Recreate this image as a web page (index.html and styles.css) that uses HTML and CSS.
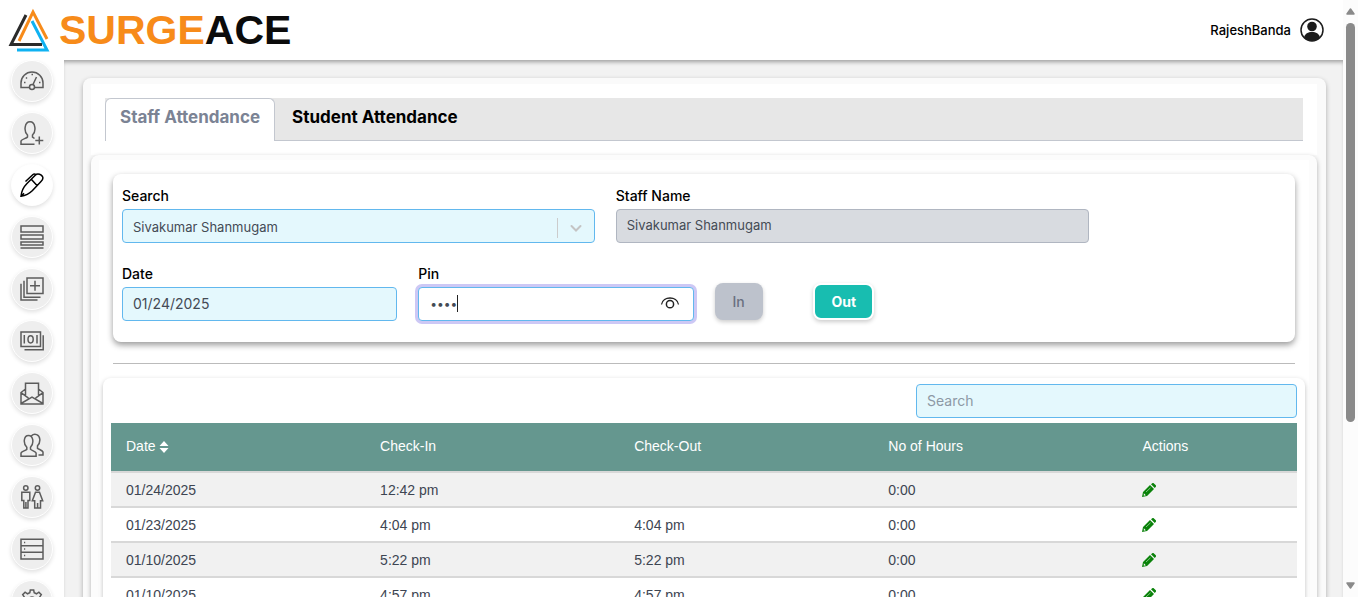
FILE: index.html
```html
<!DOCTYPE html>
<html lang="en">
<head>
<meta charset="utf-8">
<title>SurgeAce - Attendance</title>
<link rel="stylesheet" href="styles.css">
</head>
<body>
<div class="window">
  <div class="app">
    <header class="header">
      <a class="brand" href="#">
        <svg class="brand-mark" viewBox="0 0 42 44" aria-hidden="true">
          <path d="M18 7L3 36.500H34" fill="none" stroke="#2b2b2b" stroke-width="3"/>
          <path d="M11 33L25 4L39 31" fill="none" stroke="#f78b1a" stroke-width="3"/>
          <path d="M24 13L39 42H9" fill="none" stroke="#0fb2f2" stroke-width="3"/>
        </svg>
        <span class="brand-name"><span class="brand-first">SURGE</span>ACE</span>
      </a>
      <button class="account" type="button">
        <span>RajeshBanda</span>
        <svg class="account-icon" viewBox="0 0 24 24" aria-hidden="true">
          <circle cx="12" cy="12" r="11" fill="#fff" stroke="#1c1c1c" stroke-width="1.500"/>
          <circle cx="12" cy="8.500" r="4.800" fill="#1c1c1c"/>
          <path d="M4 19.500C5 15.500 8 14 12 14s7 1.500 8 5.500A11 11 0 0 1 4 19.500z" fill="#1c1c1c"/>
        </svg>
      </button>
    </header>
    <div class="body">
      <nav class="sidebar" aria-label="Main">
        <a class="nav-item" href="#" aria-label="Dashboard"><svg class="icon" viewBox="0 0 24 24"><path d="M9.500 18.500H1V14a11 11 0 0 1 22 0v4.500h-8.500M13 15.500L16.500 8"/><circle cx="12" cy="18" r="2.500"/><path d="M4 13.500h1.500M19 13.500h1.500M6 8.500l1 1M11.500 5.500h1.500"/></svg></a>
        <a class="nav-item" href="#" aria-label="Add user"><svg class="icon" viewBox="0 0 24 24"><path d="M14.500 23.300H1V20c.5-2 5.500-2.500 6.500-4v-2C3.500 10.500 4.500.8 10 .8s6.500 9.700 2.500 13.200v2l2 1.500M19.300 15.500v8M15.300 19.500h8"/></svg></a>
        <a class="nav-item active" href="#" aria-label="Attendance"><svg class="icon" viewBox="0 0 24 24"><path d="M1 23.200C1.500 18 3.500 14 7 10.500L15.500 2c2.500-2.500 6 0 7 1.500 1 1.800 0 3.500-1.500 5l-8.500 9C9.500 20.500 6 22.500 1 23.200zM1 23.200l3-3M11.500 6.500l5.500 6M5.500 8.500L13 1.500c1-.8 2-.5 3 .2"/></svg></a>
        <a class="nav-item" href="#" aria-label="Lists"><svg class="icon" viewBox="0 0 24 24"><path d="M1 1h22v6H1zM1 10h22v4H1zM1 17h22v3H1zM.500 23h23"/></svg></a>
        <a class="nav-item" href="#" aria-label="Add record"><svg class="icon" viewBox="0 0 24 24"><path d="M7 1h16v15.500H7zM15 3.800v10M10 8.800h10M4 3.700v16.600h16.500M1 6.700V23h16.500"/></svg></a>
        <a class="nav-item" href="#" aria-label="Payments"><svg class="icon" viewBox="0 0 24 24"><path d="M1 3h19.500v14.500H1zM23.200 6.300v14.400H4.500M4.300 6v8.500M17 6v8.500"/><ellipse cx="10.600" cy="10.300" rx="2.600" ry="3.600"/></svg></a>
        <a class="nav-item" href="#" aria-label="Messages"><svg class="icon" viewBox="0 0 24 24"><path d="M5.500 8L1 11.500V23h22V11.500L18.500 8M1 11.700l7.500 5.500M23 11.700l-7.500 5.500M5.500 15V2.300h13V15M1 22.500l11-6.300 11 6.300"/></svg></a>
        <a class="nav-item" href="#" aria-label="Staff"><svg class="icon" viewBox="0 0 24 24"><path d="M1 23.300V20c.5-1.500 4-2.200 5.800-3.700v-2C3 10.500 3.500 2.500 8.500 2.500s5.700 8 2 11.800v2c1.700 1.500 5 2.200 5.600 3.700v3.300zM11.500 2.800c3-3 8-1.300 8.300 3.500.2 2.700-.7 5-2.300 6.500v2.500c1.500 1.200 5 2 5.500 3.700v3h-4.500"/></svg></a>
        <a class="nav-item" href="#" aria-label="Students"><svg class="icon" viewBox="0 0 24 24"><circle cx="5.800" cy="3" r="2.200"/><circle cx="17.500" cy="3" r="2.200"/><path d="M1.800 7.300h8v8.200H8V23H3.800v-7.500h-2zM5.900 17v6M15.500 7.300h4l3.200 8.500h-2.200V23h-5.800v-7.200h-2.400zM17.600 18v5"/></svg></a>
        <a class="nav-item" href="#" aria-label="Records"><svg class="icon" viewBox="0 0 24 24"><path d="M1 2.300h22V22H1zM1 8.800h22M1 15.300h22M4 5.600h1.200M4 12h1.200M4 18.500h1.200"/></svg></a>
        <a class="nav-item" href="#" aria-label="Settings"><svg class="icon" viewBox="0 0 24 24"><path d="M9.800 3.800L10.300 1h3.400l.5 2.800 2.300 1 2.400-1.600 2.400 2.400-1.600 2.400 1 2.300 2.800.5v2.400l-2.800.5-1 2.300 1.600 2.400-2.400 2.400-2.400-1.600-2.300 1-.5 2.800h-3.400l-.5-2.800-2.300-1-2.400 1.600-2.400-2.400L4.300 16l-1-2.300L.5 13.200v-2.400l2.800-.5 1-2.300-1.600-2.400 2.400-2.400 2.400 1.600z"/><circle cx="12" cy="12" r="4"/></svg></a>
      </nav>
      <main class="content">
        <section class="panel">
          <div class="tabs-wrap">
            <div class="tabs" role="tablist">
              <button class="tab selected" role="tab" type="button" aria-selected="true">Staff Attendance</button>
              <button class="tab" role="tab" type="button" aria-selected="false">Student Attendance</button>
            </div>
          </div>
          <div class="subpanel">
            <div class="subpanel-inner">
              <form class="entry">
                <div class="field wide">
                  <label for="staff">Search</label>
                  <div class="control">
                    <select id="staff" class="input name"><option>Sivakumar Shanmugam</option></select>
                    <span class="select-arrow"><svg viewBox="0 0 20 20" aria-hidden="true"><path d="M5.500 8l4.500 4.500L14.500 8" fill="none" stroke="#c4c4c4" stroke-width="2" stroke-linecap="round"/></svg></span>
                  </div>
                </div>
                <div class="field wide">
                  <label for="name">Staff Name</label>
                  <input id="name" class="input name" value="Sivakumar Shanmugam" disabled>
                </div>
                <div class="field date">
                  <label for="date">Date</label>
                  <input id="date" class="input" value="01/24/2025">
                </div>
                <div class="field">
                  <label for="pin">Pin</label>
                  <div class="control">
                    <input id="pin" class="input pin" type="password" value="1234">
                    <span class="caret"></span>
                    <button class="reveal" type="button" aria-label="Show pin"><svg viewBox="0 0 20 16" aria-hidden="true"><path d="M1.500 9.500C3 .8 17 .8 18.500 9.500" fill="none" stroke="#222" stroke-width="1.300"/><circle cx="10" cy="9.200" r="3.600" fill="none" stroke="#222" stroke-width="1.500"/></svg></button>
                  </div>
                </div>
                <div class="action"><button class="btn" type="button" disabled>In</button></div>
                <div class="action"><button class="btn primary" type="button">Out</button></div>
              </form>
              <hr class="rule">
              <section class="records">
                <input class="input filter" type="search" placeholder="Search" aria-label="Search records">
                <table class="table">
                  <thead>
                    <tr>
                      <th>Date <svg class="sort" viewBox="0 0 10 12" aria-hidden="true"><path d="M5 0l4.500 5h-9zM5 12l4.500-5h-9z" fill="#fff"/></svg></th>
                      <th>Check-In</th><th>Check-Out</th><th>No of Hours</th><th class="last">Actions</th>
                    </tr>
                  </thead>
                  <tbody>
                    <tr><td>01/24/2025</td><td>12:42 pm</td><td></td><td>0:00</td><td><button class="edit" type="button" aria-label="Edit"><svg viewBox="0 0 14 14"><path d="M0 14l1-5L8 2 12 6l-7 7zM9 1.200L10.300.2q.7-.6 1.400 0l2.100 2.100q.6.700 0 1.400L12.800 5z" fill="#0a820a"/><path d="M1.800 10.200l2 2-2 .6z" fill="#fff"/><path d="M4 9L8.500 4.800" stroke="#b5dcb5" stroke-width=".7"/></svg></button></td></tr>
                    <tr><td>01/23/2025</td><td>4:04 pm</td><td>4:04 pm</td><td>0:00</td><td><button class="edit" type="button" aria-label="Edit"><svg viewBox="0 0 14 14"><path d="M0 14l1-5L8 2 12 6l-7 7zM9 1.200L10.300.2q.7-.6 1.400 0l2.100 2.100q.6.700 0 1.400L12.800 5z" fill="#0a820a"/><path d="M1.800 10.200l2 2-2 .6z" fill="#fff"/><path d="M4 9L8.500 4.800" stroke="#b5dcb5" stroke-width=".7"/></svg></button></td></tr>
                    <tr><td>01/10/2025</td><td>5:22 pm</td><td>5:22 pm</td><td>0:00</td><td><button class="edit" type="button" aria-label="Edit"><svg viewBox="0 0 14 14"><path d="M0 14l1-5L8 2 12 6l-7 7zM9 1.200L10.300.2q.7-.6 1.400 0l2.100 2.100q.6.700 0 1.400L12.800 5z" fill="#0a820a"/><path d="M1.800 10.200l2 2-2 .6z" fill="#fff"/><path d="M4 9L8.500 4.800" stroke="#b5dcb5" stroke-width=".7"/></svg></button></td></tr>
                    <tr><td>01/10/2025</td><td>4:57 pm</td><td>4:57 pm</td><td>0:00</td><td><button class="edit" type="button" aria-label="Edit"><svg viewBox="0 0 14 14"><path d="M0 14l1-5L8 2 12 6l-7 7zM9 1.200L10.300.2q.7-.6 1.400 0l2.100 2.100q.6.700 0 1.400L12.800 5z" fill="#0a820a"/><path d="M1.800 10.200l2 2-2 .6z" fill="#fff"/><path d="M4 9L8.500 4.800" stroke="#b5dcb5" stroke-width=".7"/></svg></button></td></tr>
                  </tbody>
                </table>
              </section>
            </div>
          </div>
        </section>
      </main>
    </div>
  </div>
  <div class="scrollbar" aria-hidden="true">
    <svg class="scroll-arrow" viewBox="0 0 9 7"><path d="M4.500 1L8 6H1z" fill="#8a8a8a" stroke="#8a8a8a" stroke-width="1.500" stroke-linejoin="round"/></svg>
    <div class="track"><div class="thumb"></div></div>
    <svg class="scroll-arrow" viewBox="0 0 9 7"><path d="M4.500 6L8 1H1z" fill="#8a8a8a" stroke="#8a8a8a" stroke-width="1.500" stroke-linejoin="round"/></svg>
  </div>
</div>
</body>
</html>
```
FILE: styles.css
```css
* { box-sizing: border-box; }

body {
  margin: 0;
  background: #fff;
  color: #000;
  font-family: Inter, "Liberation Sans", sans-serif;
  font-size: 14px;
}

button { font-family: inherit; cursor: pointer; }

.window { display: flex; height: 100vh; overflow: hidden; }
.app { flex: 1; min-width: 0; display: flex; flex-direction: column; }

.header {
  display: flex;
  align-items: center;
  justify-content: space-between;
  height: 60px;
  flex: none;
  padding: 0 19px 0 8px;
}
.brand { display: flex; align-items: center; gap: 9px; text-decoration: none; color: #0b0b0b; }
.brand-mark { width: 42px; height: 44px; }
.brand-name { font: bold 41px/60px "Liberation Sans", Arial, sans-serif; }
.brand-first { color: #f78b1a; }
.account {
  display: flex;
  align-items: center;
  gap: 9px;
  border: 0;
  padding: 0;
  background: none;
  font-size: 13px;
  font-weight: 500;
  color: #000;
}
.account-icon { width: 24px; height: 24px; }

.body { flex: 1; min-height: 0; display: flex; }

.sidebar {
  width: 64px;
  flex: none;
  display: flex;
  flex-direction: column;
  align-items: center;
  gap: 10px;
  overflow: hidden;
}
.nav-item {
  display: flex;
  align-items: center;
  justify-content: center;
  flex: none;
  width: 42px;
  height: 42px;
  border: 1px solid #fff;
  border-radius: 50%;
  background: #eee;
  color: #5c5c5c;
  box-shadow: 0 2px 4px rgba(0, 0, 0, 0.12);
}
.nav-item.active { background: #fff; color: #000; }
.icon { width: 24px; height: 24px; fill: none; stroke: currentColor; stroke-width: 1.5; }

.content {
  flex: 1;
  min-width: 0;
  overflow: hidden;
  padding: 18px 17px 0 19px;
  background: #f2f2f2;
  box-shadow: inset 0 4px 4px -2px rgba(0, 0, 0, 0.35);
}
.panel {
  padding: 6px 9px 0 8px;
  border-radius: 8px;
  background: #fafafa;
  box-shadow: 0 2px 5px rgba(0, 0, 0, 0.3);
}
.tabs-wrap { padding: 14px; background: #fff; }
.tabs { display: flex; height: 43px; background: #e7e7e7; border-bottom: 1px solid #c3c7cf; }
.tab {
  height: 43px;
  padding: 0 16px 6px;
  border: 1px solid transparent;
  border-bottom: 0;
  background: none;
  color: #000;
  font-size: 17px;
  font-weight: 700;
}
.tab.selected { border-color: #c3c7cf; border-radius: 6px 6px 0 0; background: #fff; color: #7b8394; padding: 0 14px 6px; }

.subpanel {
  padding: 5px 8px 0;
  border-radius: 8px;
  background: #fcfcfc;
  box-shadow: 0 2px 5px rgba(0, 0, 0, 0.3);
}
.subpanel-inner { padding: 14px 4px 60px; background: #fff; }

.entry {
  display: grid;
  grid-template-columns: repeat(12, minmax(0, 1fr));
  gap: 21px;
  margin: 0 10px;
  padding: 12px 9px 21px;
  border-radius: 8px;
  background: #fff;
  box-shadow: 0 3px 6px rgba(0, 0, 0, 0.4);
}
.field { grid-column: span 3; }
.field.wide { grid-column: span 5; }
.field.date { grid-column: 1 / span 3; }
.field label { display: block; margin-bottom: 3px; line-height: 20px; font-weight: 500; }
.control { position: relative; }
.input {
  display: block;
  width: 100%;
  height: 34px;
  padding: 0 10px 2px;
  border: 1px solid #62b8ee;
  border-radius: 4px;
  background: #e4f8fd;
  color: #444b55;
  font-family: inherit;
  font-size: 14px;
  appearance: none;
  outline: 0;
}
.input.name { font-size: 13px; }
select.input { padding: 2px 10px 0; }
.input:disabled { background: #d8dbe0; border-color: #b0b6c1; opacity: 1; }
.input::placeholder { color: #8d98a5; opacity: 1; }
.select-arrow {
  position: absolute;
  top: 9px;
  right: 8px;
  width: 30px;
  height: 20px;
  padding-left: 8px;
  border-left: 1px solid #ccc;
  pointer-events: none;
}
.select-arrow svg { display: block; width: 20px; height: 20px; }
.input.pin { padding-left: 11px; font-size: 12px; background: #fff; box-shadow: 0 0 0 3px #cdc8f5; }
.caret { position: absolute; left: 39px; top: 8px; width: 1px; height: 17px; background: #222; }
.reveal {
  position: absolute;
  top: 8px;
  right: 14px;
  padding: 0;
  border: 0;
  background: none;
}
.reveal svg { display: block; width: 20px; height: 16px; }

.action { padding-top: 19px; }
.btn {
  width: 48px;
  height: 37px;
  border: 0;
  border-radius: 8px;
  background: #bdc2cc;
  color: #6a7080;
  font-size: 14px;
  font-weight: 500;
  box-shadow: 0 2px 4px rgba(0, 0, 0, 0.2);
}
.btn.primary { width: 61px; border: 2px solid #fff; background: #18bdb0; color: #fff; font-weight: 700; }

.rule { height: 1px; margin: 21px 10px 14px; border: 0; background: #bbb; }

.records {
  padding: 6px 8px 8px;
  border-radius: 8px;
  background: #fff;
  box-shadow: 0 2px 5px rgba(0, 0, 0, 0.25);
}
.filter { width: 381px; margin: 0 0 5px auto; }

.table {
  width: 100%;
  table-layout: fixed;
  border-collapse: separate;
  border-spacing: 0;
  color: #3d4552;
  font: 14px/20px "Liberation Sans", Arial, sans-serif;
}
.table th {
  height: 48px;
  padding: 0 15px 2px;
  background: #65978f;
  color: #fff;
  font-weight: 400;
  text-align: left;
}
.table .last { width: 14.3%; }
.table td { height: 35px; padding: 1px 15px; border-top: 2px solid #d8d8d8; }
.table tbody tr:nth-child(odd) { background: #f1f1f1; }
.sort { width: 10px; height: 12px; vertical-align: -2px; }
.edit { display: block; padding: 0; border: 0; background: none; }
.edit svg { display: block; width: 14px; height: 14px; }

.scrollbar {
  display: flex;
  flex-direction: column;
  align-items: center;
  width: 15px;
  flex: none;
  padding: 8px 0;
  background: #fcfcfc;
}
.scroll-arrow { width: 9px; height: 7px; flex: none; }
.track { flex: 1; width: 9px; padding: 8px 0; }
.thumb { height: 72.5%; border-radius: 5px; background: #8a8a8a; }
```
